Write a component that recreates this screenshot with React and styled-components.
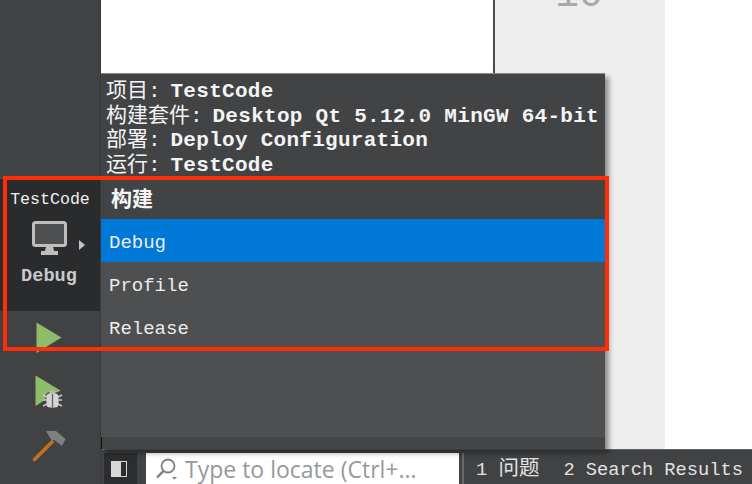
import React from "react";
import styled, { createGlobalStyle } from "styled-components";

const mono = `"Liberation Mono", "Noto Sans CJK SC", monospace`;

const GlobalStyle = createGlobalStyle`
  html, body {
    margin: 0;
    padding: 0;
    background: #fff;
  }
`;

const Window = styled.div`
  position: relative;
  width: 752px;
  height: 484px;
  overflow: hidden;
  display: grid;
  grid-template-columns: 101px 1fr;
  font-family: ${mono};
`;

const Rail = styled.aside`
  display: flex;
  flex-direction: column;
  background: #404244;
  border-right: 1px solid #38393b;
  padding-top: 178px;
  box-sizing: border-box;
`;

const KitSelector = styled.div`
  height: 133px;
  box-sizing: border-box;
  background: #2a2b2d;
  border-top: 1px solid #55575a;
  display: flex;
  flex-direction: column;
  align-items: center;
  color: #e4e4e4;
`;

const KitName = styled.div`
  font-size: 16.6px;
  line-height: 20px;
  margin-top: 11px;
  color: #f0f0f0;
`;

const KitIconRow = styled.div`
  position: relative;
  margin-top: 11px;
  height: 36px;
  width: 36px;
  margin-left: -1px;
`;

const KitArrow = styled.span`
  position: absolute;
  left: 47px;
  top: 19px;
  width: 0;
  height: 0;
  border-left: 6px solid #c4c4c4;
  border-top: 5px solid transparent;
  border-bottom: 5px solid transparent;
`;

const KitBuild = styled.div`
  font-size: 18.6px;
  font-weight: 700;
  line-height: 20px;
  margin-top: 10px;
  margin-left: -2px;
  color: #c9c9c9;
`;

const RailButton = styled.div`
  height: 54px;
  display: flex;
  justify-content: center;
  align-items: center;
  padding-right: 2px;
`;

const Main = styled.main`
  display: flex;
  flex-direction: column;
  min-width: 0;
`;

const EditorRow = styled.div`
  flex: 1;
  display: flex;
  min-height: 0;
`;

const EditorPane = styled.div`
  width: 392px;
  background: #fff;
  border-right: 2px solid #4a4a4a;
`;

const Gutter = styled.div`
  width: 170px;
  background: #eeeeee;
  overflow: hidden;
`;

const LineNumber = styled.div`
  margin: -24px 0 0 60px;
  font-size: 40px;
  line-height: 40px;
  color: #a6aab0;
`;

const Blank = styled.div`
  flex: 1;
  background: #fff;
`;

const StatusBar = styled.footer`
  height: 35px;
  box-sizing: border-box;
  background: #404244;
  border-top: 1px solid #606265;
  padding: 3px 0 0 3px;
  display: flex;
  align-items: stretch;
`;

const SideToggle = styled.div`
  width: 33px;
  background: #2c2d2f;
  display: flex;
  align-items: center;
  justify-content: center;
  padding-right: 3px;
  box-sizing: border-box;
  margin-right: 9px;
`;

const LocatorBox = styled.div`
  width: 313px;
  background: #fff;
  display: flex;
  align-items: center;
  padding-left: 9px;
  box-sizing: border-box;
  gap: 6px;
  font-family: "Open Sans", "Noto Sans", sans-serif;
  font-size: 23px;
  color: #96999c;
  white-space: nowrap;
`;

const Separator = styled.div`
  width: 2px;
  background: #66686b;
  margin-left: 3px;
`;

const StatusItem = styled.div`
  font-size: 18.7px;
  line-height: 34px;
  margin-left: ${(p) => p.$gap}px;
  color: #e2e2e2;
  white-space: pre;
`;

const StatusCjk = styled.span`
  font-size: 20.5px;
`;

const Popup = styled.section`
  position: absolute;
  left: 101px;
  top: 73px;
  width: 504px;
  height: 376px;
  box-sizing: border-box;
  border-top: 1px solid #8a8a8a;
  background: #424345;
  box-shadow: 4px 4px 5px rgba(0, 0, 0, 0.4);
  display: flex;
  flex-direction: column;

  &::before {
    content: "";
    position: absolute;
    left: 0;
    bottom: 0;
    width: 1px;
    height: 12px;
    background: #111;
  }
`;

const Info = styled.div`
  height: 106px;
  padding: 6px 0 0 5px;
  box-sizing: border-box;
  font-size: 21px;
  line-height: 24.6px;
  font-weight: 700;
  color: #f4f4f4;
`;

const InfoLine = styled.div`
  white-space: pre;
  letter-spacing: 0.28px;
`;

const InfoLabel = styled.span`
  font-weight: 400;
  letter-spacing: 0;
  margin-right: -3px;
`;

const Heading = styled.div`
  height: 39px;
  box-sizing: border-box;
  padding-left: 10px;
  font-size: 21px;
  line-height: 41px;
  font-weight: 700;
  color: #f6f6f6;
`;

const ConfigList = styled.div`
  flex: 1;
  background: #4e4f51;
  display: flex;
  flex-direction: column;
`;

const ConfigItem = styled.div`
  height: 43px;
  line-height: 49px;
  padding-left: 8px;
  font-size: 19px;
  color: #ececec;
  background: ${(p) => (p.$active ? "#0078d7" : "transparent")};
`;

const ListFooter = styled.div`
  height: 12px;
  margin-top: auto;
  background: #434446;
`;

const Annotation = styled.div`
  position: absolute;
  left: 3px;
  top: 176px;
  width: 606px;
  height: 175px;
  box-sizing: border-box;
  border: 4px solid #ff2d0a;
  pointer-events: none;
`;

const MonitorIcon = () => (
  <svg width="36" height="36" viewBox="0 0 36 36">
    <rect x="1.5" y="1.5" width="32" height="23" rx="2" fill="#4e4f51" stroke="#bdbdbd" strokeWidth="3" />
    <path d="M14 26h7l1.5 5h-10z" fill="#bdbdbd" />
    <rect x="9" y="30" width="17" height="4" fill="#bdbdbd" />
  </svg>
);

const PlayIcon = () => (
  <svg width="26" height="32" viewBox="0 0 26 32">
    <path d="M0.5 0.5L25.5 15.5L0.5 31z" fill="#8fbc68" />
  </svg>
);

const DebugRunIcon = () => (
  <svg width="29" height="34" viewBox="0 0 29 34">
    <path d="M0.5 0.5L25.5 15.5L0.5 31z" fill="#8fbc68" />
    <rect x="10" y="17" width="16" height="16" rx="5" fill="#404244" opacity="0.75" />
    <path d="M8 20l4 2M8 25h4M8 31l4-2M27 20l-4 2M27 25h-4M27 31l-4-2" stroke="#c8c8c8" strokeWidth="1.5" />
    <rect x="14.5" y="15.5" width="6" height="4" rx="1.5" fill="#b8b8b8" />
    <rect x="11.5" y="18.5" width="12" height="14" rx="3.5" fill="#d4d4d4" />
    <path d="M17.5 19v13" stroke="#5a5c5f" strokeWidth="1.2" />
  </svg>
);

const HammerIcon = () => (
  <svg width="34" height="31" viewBox="0 0 34 31">
    <path d="M2.5 28.5L20 11" stroke="#c4711a" strokeWidth="3.6" strokeLinecap="round" />
    <path d="M14 0h10l9.5 8-3.5 7-8-6h-2.5z" fill="#7e7f81" />
  </svg>
);

const PanelIcon = () => (
  <svg width="16" height="16" viewBox="0 0 16 16">
    <rect x="0.5" y="0.5" width="15" height="15" fill="#2c2d2f" stroke="#d8d8d8" />
    <rect x="0" y="0" width="10" height="16" fill="#d8d8d8" />
  </svg>
);

const SearchIcon = () => (
  <svg width="24" height="24" viewBox="0 0 24 24">
    <circle cx="13" cy="9" r="6.5" fill="none" stroke="#7d7f82" strokeWidth="1.8" />
    <path d="M8.5 14L2 20.5" stroke="#7d7f82" strokeWidth="2.4" />
    <path d="M17 20h5l-2.5 2.5z" fill="#7d7f82" />
  </svg>
);

export default function App() {
  const configs = ["Debug", "Profile", "Release"];
  const activeConfig = "Debug";

  return (
    <>
      <GlobalStyle />
      <Window>
        <Rail>
          <KitSelector>
            <KitName>TestCode</KitName>
            <KitIconRow>
              <MonitorIcon />
              <KitArrow />
            </KitIconRow>
            <KitBuild>Debug</KitBuild>
          </KitSelector>
          <RailButton>
            <PlayIcon />
          </RailButton>
          <RailButton>
            <DebugRunIcon />
          </RailButton>
          <RailButton>
            <HammerIcon />
          </RailButton>
        </Rail>
        <Main>
          <EditorRow>
            <EditorPane />
            <Gutter>
              <LineNumber>10</LineNumber>
            </Gutter>
            <Blank />
          </EditorRow>
          <StatusBar>
            <SideToggle>
              <PanelIcon />
            </SideToggle>
            <LocatorBox>
              <SearchIcon />
              Type to locate (Ctrl+...
            </LocatorBox>
            <Separator />
            <StatusItem $gap={12}>
              1 <StatusCjk>问题</StatusCjk>
            </StatusItem>
            <StatusItem $gap={24}>2 Search Results</StatusItem>
          </StatusBar>
        </Main>
        <Popup>
          <Info>
            <InfoLine>
              <InfoLabel>项目:</InfoLabel> TestCode
            </InfoLine>
            <InfoLine>
              <InfoLabel>构建套件:</InfoLabel> Desktop Qt 5.12.0 MinGW 64-bit
            </InfoLine>
            <InfoLine>
              <InfoLabel>部署:</InfoLabel> Deploy Configuration
            </InfoLine>
            <InfoLine>
              <InfoLabel>运行:</InfoLabel> TestCode
            </InfoLine>
          </Info>
          <Heading>构建</Heading>
          <ConfigList>
            {configs.map((name) => (
              <ConfigItem key={name} $active={name === activeConfig}>
                {name}
              </ConfigItem>
            ))}
            <ListFooter />
          </ConfigList>
        </Popup>
        <Annotation />
      </Window>
    </>
  );
}
